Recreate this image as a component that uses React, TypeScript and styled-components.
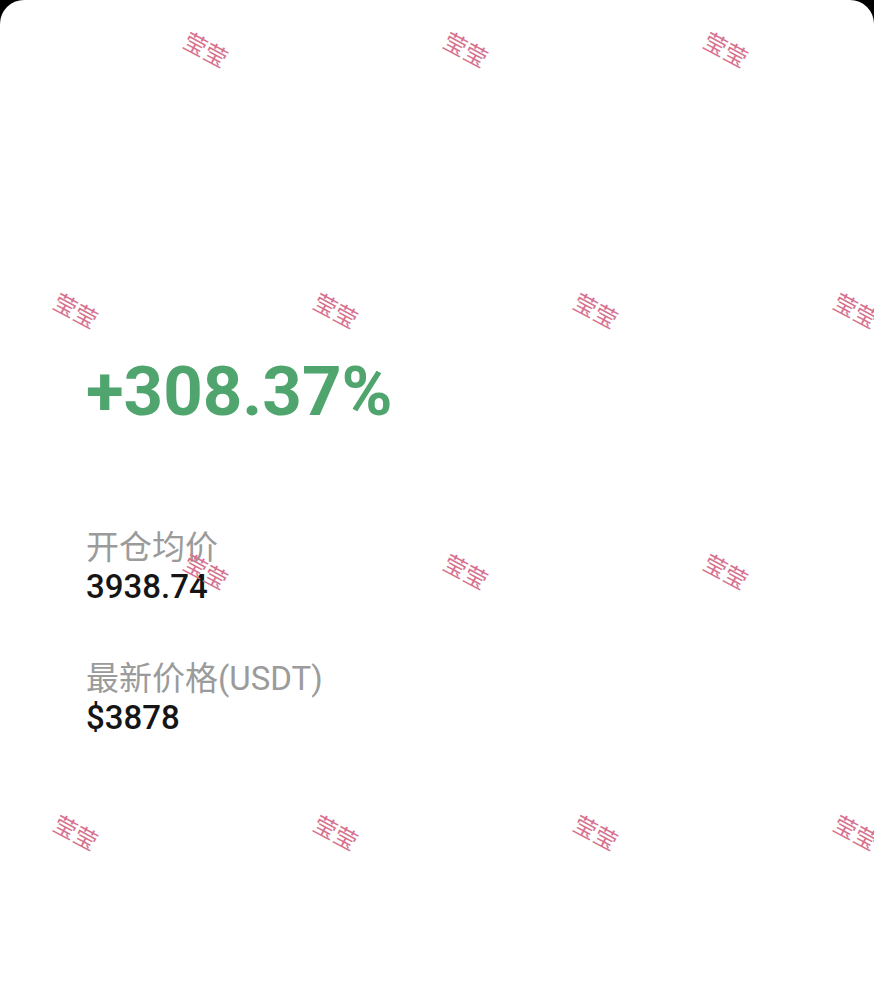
import React from "react";
import styled, { createGlobalStyle } from "styled-components";

const Global = createGlobalStyle`
  html, body { margin: 0; padding: 0; background: #000; }
  body { font-family: Roboto, "Noto Sans CJK SC", sans-serif; }
`;

const Screen = styled.div`
  position: relative;
  width: 874px;
  height: 987px;
  background: #fff;
  border-radius: 24px 24px 0 0;
  overflow: hidden;
  box-sizing: border-box;
  padding: 350px 0 0 86px;
`;

const Percent = styled.div`
  font-family: Roboto, sans-serif;
  font-weight: 700;
  font-size: 69px;
  line-height: 84px;
  color: #4fa56d;
`;

const InfoList = styled.div`
  display: flex;
  flex-direction: column;
  gap: 53px;
  margin-top: 94px;
`;

const Info = styled.div`
  display: flex;
  flex-direction: column;
`;

const Label = styled.div`
  font-family: Roboto, "Noto Sans CJK SC", sans-serif;
  font-size: 33px;
  line-height: 40px;
  color: #9b9b9b;
`;

const Value = styled.div`
  font-family: Roboto, sans-serif;
  font-weight: 500;
  font-size: 33px;
  line-height: 38px;
  color: #151515;
`;

const Mark = styled.span`
  position: absolute;
  font-family: "Noto Sans CJK SC", sans-serif;
  font-size: 23px;
  line-height: 1;
  color: #d6728f;
  transform: translate(-50%, -50%) rotate(28deg);
  white-space: nowrap;
  pointer-events: none;
`;

const marks: { x: number; y: number }[] = [];
for (let r = 0; r < 4; r++) {
  const y = 49 + r * 261;
  const xs = r % 2 === 0 ? [206, 466, 726] : [76, 336, 596, 856];
  xs.forEach((x) => marks.push({ x, y }));
}

export default function App() {
  return (
    <>
      <Global />
      <Screen>
        <Percent>+308.37%</Percent>
        <InfoList>
          <Info>
            <Label>开仓均价</Label>
            <Value>3938.74</Value>
          </Info>
          <Info>
            <Label>最新价格(USDT)</Label>
            <Value>$3878</Value>
          </Info>
        </InfoList>
        {marks.map((m, i) => (
          <Mark key={i} style={{ left: m.x, top: m.y }}>
            莹莹
          </Mark>
        ))}
      </Screen>
    </>
  );
}
